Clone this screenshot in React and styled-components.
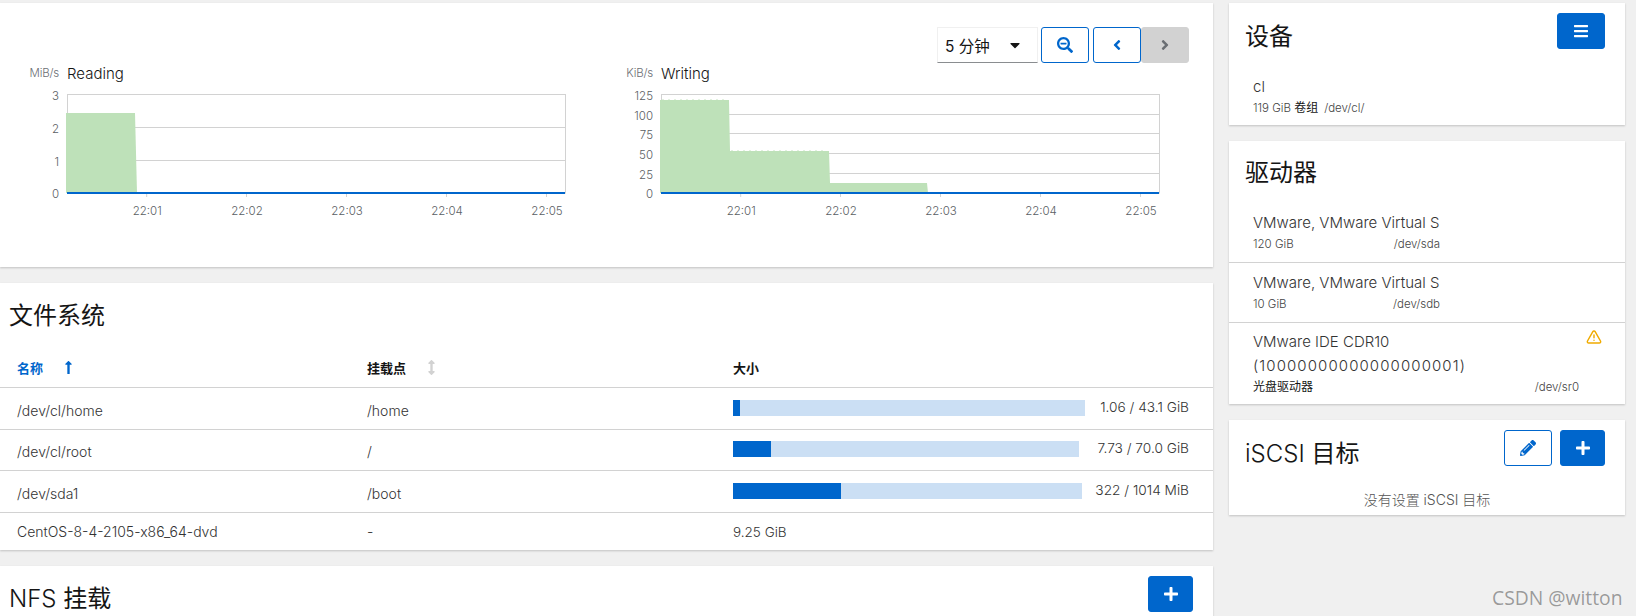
import React from "react";
import styled, { createGlobalStyle } from "styled-components";
import { FaSearchMinus, FaAngleLeft, FaAngleRight, FaBars, FaPlus, FaPencilAlt, FaCaretDown, FaLongArrowAltUp, FaArrowsAltV } from "react-icons/fa";
import { TriangleAlert } from "lucide-react";

const Global = createGlobalStyle`
  html, body { margin: 0; padding: 0; height: 616px; overflow: hidden; background: #f0f0f0; }
  body { font-family: Inter, "Noto Sans CJK SC", sans-serif; font-weight: 300; color: #151515; }
  #root { height: 616px; overflow: hidden; }
`;

const Page = styled.div`
  position: relative;
  display: grid;
  grid-template-columns: 1213px 396px;
  column-gap: 16px;
  align-items: start;
  padding-top: 3px;
  height: 613px;
  overflow: hidden;
`;
const Column = styled.div`
  display: flex;
  flex-direction: column;
  gap: 16px;
  min-width: 0;
`;
const Card = styled.section`
  background: #fff;
  box-shadow: 0 1px 2px rgba(3, 3, 3, 0.2);
`;
const ChartCard = styled(Card)`
  height: 264px;
  padding-top: 24px;
  box-sizing: border-box;
`;
const Controls = styled.div`
  display: flex;
  justify-content: flex-end;
  padding-right: 24px;
  height: 36px;
`;
const SelectBox = styled.div`
  width: 101px;
  height: 36px;
  box-sizing: border-box;
  border: 1px solid #f0f0f0;
  border-bottom-color: #8a8d90;
  display: flex;
  align-items: center;
  justify-content: space-between;
  padding: 0 14px 0 7px;
  margin-right: 3px;
  font-size: 15.5px;
  font-weight: 400;
  svg { font-size: 16px; color: #151515; }
`;
const IconButton = styled.button`
  width: ${(p) => p.$w || 48}px;
  height: 36px;
  padding: 0;
  box-sizing: border-box;
  border-radius: 3px;
  display: inline-flex;
  align-items: center;
  justify-content: center;
  font-size: 16px;
  border: 1px solid ${(p) => (p.$variant === "disabled" ? "#d2d2d2" : "#06c")};
  background: ${(p) => (p.$variant === "primary" ? "#06c" : p.$variant === "disabled" ? "#d2d2d2" : "#fff")};
  color: ${(p) => (p.$variant === "primary" ? "#fff" : p.$variant === "disabled" ? "#6a6e73" : "#06c")};
`;
const NavGroup = styled.div`
  display: flex;
  gap: 4px;
`;
const Charts = styled.div`
  display: grid;
  grid-template-columns: 594px 594px;
`;
const ChartHead = styled.div`
  display: grid;
  grid-template-columns: 59px 1fr;
  column-gap: 8px;
  align-items: center;
  box-sizing: border-box;
  height: 22px;
  padding-bottom: 2px;
`;
const Unit = styled.span`
  text-align: right;
  font-size: 11.5px;
  color: #6a6e73;
  letter-spacing: -0.2px;
`;
const ChartTitle = styled.span`
  font-size: 15px;
  font-weight: 300;
  color: #151515;
`;
const ChartSvg = styled.svg`
  display: block;
  width: 594px;
  height: 140px;
  text {
    font-family: Inter, sans-serif;
    font-weight: 300;
    font-size: 11.5px;
    fill: #5a5e63;
  }
`;

const xt = [146.7, 246.5, 346.5, 446.5, 546.5];
const times = ["22:01", "22:02", "22:03", "22:04", "22:05"];

function Chart({ unit, title, ticks, area, dots }) {
  return (
    <div>
      <ChartHead>
        <Unit>{unit}</Unit>
        <ChartTitle>{title}</ChartTitle>
      </ChartHead>
      <ChartSvg viewBox="0 85 594 140">
        <rect x="67.5" y="94.5" width="498" height="98.5" fill="none" stroke="#d2d2d2" />
        {ticks.map((t) => (
          <g key={t.l}>
            {t.y > 95 && t.y < 192 && <line x1="67" x2="565" y1={t.y} y2={t.y} stroke="#d2d2d2" />}
            <text x="59" y={t.y + 5} textAnchor="end">{t.l}</text>
          </g>
        ))}
        <path d={area} fill="#bee1b9" />
        {dots.map((d) => (
          <line key={d.y} x1={d.x1} x2={d.x2} y1={d.y} y2={d.y} stroke="#e2f1df" strokeWidth="1" strokeDasharray="2 4" />
        ))}
        {xt.map((x, i) => (
          <g key={x}>
            <line x1={x} x2={x} y1="193" y2="197" stroke="#d2d2d2" />
            <text x={x + 0.5} y="215" textAnchor="middle">{times[i]}</text>
          </g>
        ))}
        <rect x="67" y="192" width="498" height="2" fill="#06c" />
      </ChartSvg>
    </div>
  );
}

const Header = styled.header`
  display: flex;
  justify-content: space-between;
  align-items: flex-start;
  box-sizing: border-box;
  height: ${(p) => p.$h}px;
  padding: ${(p) => p.$top}px 20px 0 ${(p) => p.$left}px;
`;
const Title = styled.h2`
  margin: ${(p) => p.$mt || 0}px 0 0;
  font-size: 24px;
  line-height: 36px;
  font-weight: 400;
  color: #151515;
`;
const TitleLatin = styled.span`
  font-weight: 300;
`;
const Actions = styled.div`
  display: flex;
  gap: 8px;
`;

const Row = styled.div`
  display: grid;
  grid-template-columns: 350px 366px 1fr;
  align-items: center;
  box-sizing: border-box;
  height: ${(p) => p.$h}px;
  padding-left: 17px;
  padding-right: 24px;
  border-bottom: ${(p) => (p.$plain ? "0" : "1px solid #d2d2d2")};
  font-size: 14px;
  color: #333;
`;
const HeadCell = styled.div`
  display: flex;
  align-items: center;
  gap: ${(p) => p.$gap}px;
  margin-bottom: 3px;
  font-size: 13px;
  font-weight: 700;
  color: ${(p) => (p.$active ? "#06c" : "#151515")};
  svg { font-size: 15px; color: ${(p) => (p.$active ? "#06c" : "#d2d2d2")}; }
`;
const Cell = styled.div`
  margin-top: ${(p) => (p.$flat ? 0 : 3)}px;
  font-size: ${(p) => (p.$small ? 13.5 : 14)}px;
`;
const Usage = styled.div`
  display: flex;
  align-items: center;
  gap: 12px;
  margin-bottom: 2px;
  font-size: 13.7px;
`;
const Bar = styled.div`
  flex: 1;
  height: 16px;
  background: #cbdff4;
  display: flex;
`;
const BarFill = styled.div`
  background: #06c;
  height: 100%;
`;
const UsageLabel = styled.span`
  flex: none;
  text-align: right;
  white-space: nowrap;
  color: #333;
  margin-bottom: 2px;
`;

const ListItem = styled.div`
  position: relative;
  padding: ${(p) => (p.$wrap ? "7.5px" : "8.5px")} 24px;
  border-top: ${(p) => (p.$first ? "0" : "1px solid #d2d2d2")};
`;
const ItemBody = styled.div`
  width: ${(p) => p.$w}px;
`;
const ItemName = styled.div`
  font-size: 15px;
  line-height: 24px;
  color: #333;
`;
const Serial = styled.span`
  letter-spacing: 1.09px;
`;
const ItemSub = styled.div`
  display: flex;
  justify-content: ${(p) => (p.$left ? "flex-start" : "space-between")};
  gap: ${(p) => (p.$left ? "6px" : "0")};
  font-size: 11.5px;
  line-height: 18px;
  color: #444;
`;
const CjkNote = styled.span`
  font-size: 12px;
  color: #151515;
  font-weight: 400;
`;
const WarnIcon = styled.div`
  position: absolute;
  top: 6px;
  right: 23px;
  color: #f0ab00;
  display: flex;
`;
const Empty = styled.p`
  margin: 0;
  text-align: center;
  font-size: 14px;
  line-height: 21px;
  padding-bottom: 5px;
  color: #555;
`;
const Watermark = styled.div`
  position: absolute;
  left: 1492px;
  top: 585px;
  font-family: "Open Sans", sans-serif;
  font-size: 19.3px;
  line-height: 26px;
  font-weight: 400;
  color: #9a9a9a;
  text-shadow: 0 0 1px #fff;
  white-space: nowrap;
`;

const rows = [
  { n: "/dev/cl/home", m: "/home", t: "1.06 / 43.1 GiB", w: 92, p: 2.1, h: 42 },
  { n: "/dev/cl/root", m: "/", t: "7.73 / 70.0 GiB", w: 98, p: 11, h: 41 },
  { n: "/dev/sda1", m: "/boot", t: "322 / 1014 MiB", w: 95, p: 31, h: 42 },
];

export default function App() {
  return (
    <Page>
      <Global />
      <Column>
        <ChartCard>
          <Controls>
            <SelectBox>5 分钟<FaCaretDown /></SelectBox>
            <NavGroup>
              <IconButton aria-label="zoom out"><FaSearchMinus /></IconButton>
              <IconButton aria-label="previous"><FaAngleLeft /></IconButton>
            </NavGroup>
            <IconButton $variant="disabled" aria-label="next"><FaAngleRight /></IconButton>
          </Controls>
          <Charts>
            <Chart
              unit="MiB/s"
              title="Reading"
              ticks={[{ l: "3", y: 94.5 }, { l: "2", y: 127.5 }, { l: "1", y: 160.5 }, { l: "0", y: 193 }]}
              area="M66 113H135L137 193H66Z"
              dots={[]}
            />
            <Chart
              unit="KiB/s"
              title="Writing"
              ticks={[{ l: "125", y: 94.5 }, { l: "100", y: 114.5 }, { l: "75", y: 133.5 }, { l: "50", y: 153.5 }, { l: "25", y: 173.5 }, { l: "0", y: 193 }]}
              area="M66 100H135L136 151H235L236 183H333L334 193H66Z"
              dots={[{ y: 99.5, x1: 68, x2: 130 }, { y: 150.5, x1: 137, x2: 233 }]}
            />
          </Charts>
        </ChartCard>

        <Card>
          <Header $h={68} $top={15} $left={9}><Title>文件系统</Title></Header>
          <Row $h={37}>
            <HeadCell $active $gap={18}>名称<FaLongArrowAltUp /></HeadCell>
            <HeadCell $gap={18}>挂载点<FaArrowsAltV /></HeadCell>
            <HeadCell>大小</HeadCell>
          </Row>
          {rows.map((r) => (
            <Row key={r.n} $h={r.h}>
              <Cell>{r.n}</Cell>
              <Cell>{r.m}</Cell>
              <Usage>
                <Bar><BarFill style={{ width: `${r.p}%` }} /></Bar>
                <UsageLabel style={{ width: r.w }}>{r.t}</UsageLabel>
              </Usage>
            </Row>
          ))}
          <Row $h={37} $plain>
            <Cell $flat>CentOS-8-4-2105-x86_64-dvd</Cell>
            <Cell $flat>-</Cell>
            <Cell $flat $small>9.25 GiB</Cell>
          </Row>
        </Card>

        <Card>
          <Header $h={60} $top={10} $left={9}>
            <Title $mt={5}><TitleLatin>NFS</TitleLatin> 挂载</Title>
            <IconButton $variant="primary" $w={45}><FaPlus /></IconButton>
          </Header>
        </Card>
      </Column>

      <Column>
        <Card>
          <Header $h={63} $top={10} $left={16}>
            <Title $mt={6}>设备</Title>
            <IconButton $variant="primary"><FaBars /></IconButton>
          </Header>
          <ListItem $first>
            <ItemName>cl</ItemName>
            <ItemSub $left><span>119 GiB <CjkNote>卷组</CjkNote></span><span>/dev/cl/</span></ItemSub>
          </ListItem>
        </Card>

        <Card>
          <Header $h={61.5} $top={14} $left={16}><Title>驱动器</Title></Header>
          <ListItem $first>
            <ItemBody $w={187}>
              <ItemName>VMware, VMware Virtual S</ItemName>
              <ItemSub><span>120 GiB</span><span>/dev/sda</span></ItemSub>
            </ItemBody>
          </ListItem>
          <ListItem>
            <ItemBody $w={187}>
              <ItemName>VMware, VMware Virtual S</ItemName>
              <ItemSub><span>10 GiB</span><span>/dev/sdb</span></ItemSub>
            </ItemBody>
          </ListItem>
          <ListItem $wrap>
            <ItemBody $w={326}>
              <ItemName>VMware IDE CDR10<br /><Serial>(10000000000000000001)</Serial></ItemName>
              <ItemSub><CjkNote>光盘驱动器</CjkNote><span>/dev/sr0</span></ItemSub>
            </ItemBody>
            <WarnIcon><TriangleAlert size={16} strokeWidth={2.2} /></WarnIcon>
          </ListItem>
        </Card>

        <Card>
          <Header $h={69} $top={10} $left={16}>
            <Title $mt={6}><TitleLatin>iSCSI</TitleLatin> 目标</Title>
            <Actions>
              <IconButton aria-label="edit"><FaPencilAlt /></IconButton>
              <IconButton $variant="primary" $w={45} aria-label="add"><FaPlus /></IconButton>
            </Actions>
          </Header>
          <Empty>没有设置 iSCSI 目标</Empty>
        </Card>
      </Column>
      <Watermark>CSDN @witton</Watermark>
    </Page>
  );
}
